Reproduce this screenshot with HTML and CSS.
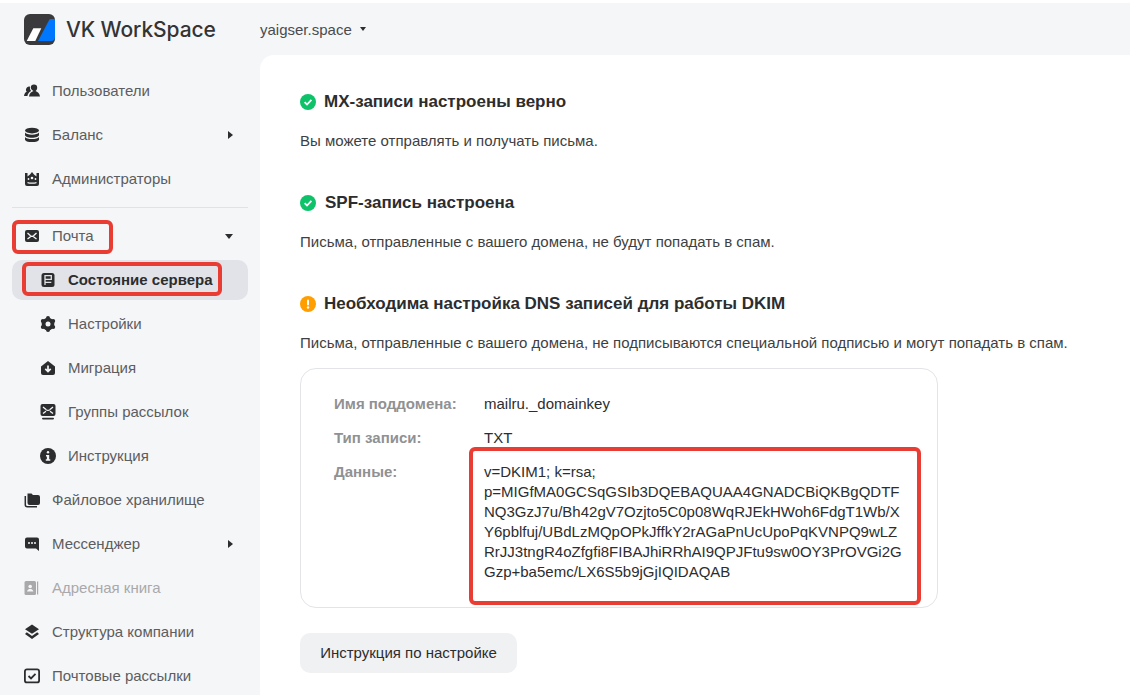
FILE: index.html
```html
<!DOCTYPE html>
<html lang="ru">
<head>
<meta charset="utf-8">
<title>VK WorkSpace</title>
<link rel="stylesheet" href="styles.css">
</head>
<body>
<div class="shell">
  <aside class="sidebar">
    <div class="logo">
      <svg class="logo-mark" viewBox="0 0 31 31"><rect width="31" height="31" rx="6" fill="#3a3a3c"/><path d="M2.700 27L9.300 14.300H17.300L11.300 27Z" fill="#fff"/><path d="M14 27L25.300 5.700Q25.700 5 26.500 5H31V23Q31 27 27 27Z" fill="#07f"/></svg>
      <span class="logo-text">VK WorkSpace</span>
    </div>
    <nav class="menu">
      <a class="item"><svg class="ico" viewBox="0 0 16 16"><path d="M10 1.500a3.200 3.200 0 0 1 3.200 3.200c0 1.400-.8 2.700-1.700 3.400 2 .7 4 2 4.500 5.400H5c.4-3.400 2.500-4.700 4.500-5.400-.9-.7-2.700-2-2.700-3.400A3.200 3.200 0 0 1 10 1.500zM5 3.500c.4 0 .8 0 1 .2-.3 1.800.3 3.300 1.200 4.300C5.300 9 3.800 10.500 3.400 13H0c.3-2.500 1.300-3.600 2.700-4.300C2 8 1.800 7 2.100 6 2.500 4.500 3.700 3.500 5 3.500z" fill="#2c2d2e"/></svg><span>Пользователи</span></a>
      <a class="item"><svg class="ico" viewBox="0 0 16 16"><ellipse cx="8" cy="3.600" rx="7" ry="2.800" fill="#2c2d2e"/><path d="M1 5.600c1 1.500 3.500 2.100 7 2.100s6-.6 7-2.100V8c0 1.500-3 2.700-7 2.700S1 9.500 1 8zM1 10c1 1.500 3.500 2.100 7 2.100s6-.6 7-2.100v2.400c0 1.500-3 2.700-7 2.700s-7-1.200-7-2.700z" fill="#2c2d2e"/></svg><span>Баланс</span><i class="caret-right"></i></a>
      <a class="item"><svg class="ico" viewBox="0 0 16 16"><path d="M1 2h2.500v3.500L6 3.500 8 1l2 2.500 2.500 2V2H15v11a2 2 0 0 1-2 2H3a2 2 0 0 1-2-2z" fill="#2c2d2e"/><circle cx="8" cy="7" r="1.300" fill="#f5f6f8"/><circle cx="4.500" cy="8" r=".9" fill="#f5f6f8"/><circle cx="11.500" cy="8" r=".9" fill="#f5f6f8"/><path d="M3.500 11c2.500.8 6.500.8 9 0v1.300c-2.500.7-6.500.7-9 0z" fill="#f5f6f8"/></svg><span>Администраторы</span></a>
      <hr class="divider">
      <a class="item"><svg class="ico" viewBox="0 0 16 16"><rect x="1" y="2" width="14" height="12" rx="2" fill="#2c2d2e"/><path d="M3.500 5l3 2.800M12.500 5l-3 2.800M3.500 11l3-2.300M12.500 11l-3-2.300M6.500 7.900c1 .7 2 .7 3 0" stroke="#f5f6f8" stroke-width="1.300" fill="none"/></svg><span>Почта</span><i class="caret-down"></i></a>
      <a class="item sub active"><svg class="ico" viewBox="0 0 16 16"><rect x="1.500" y="1" width="13" height="14" rx="2.500" fill="#2c2d2e"/><path d="M5 13V3.700h6.300V7.300H5M5 10.300h6.300" fill="none" stroke="#e2e3e8" stroke-width="1.300"/></svg><span>Состояние сервера</span></a>
      <a class="item sub"><svg class="ico" viewBox="0 0 16 16"><circle cx="8" cy="8" r="6.300" fill="#2c2d2e"/><circle cx="8" cy="2" r="2" fill="#2c2d2e"/><circle cx="8" cy="14" r="2" fill="#2c2d2e"/><circle cx="2.800" cy="5" r="2" fill="#2c2d2e"/><circle cx="13.200" cy="5" r="2" fill="#2c2d2e"/><circle cx="2.800" cy="11" r="2" fill="#2c2d2e"/><circle cx="13.200" cy="11" r="2" fill="#2c2d2e"/><circle cx="8" cy="8" r="2.500" fill="#f5f6f8"/></svg><span>Настройки</span></a>
      <a class="item sub"><svg class="ico" viewBox="0 0 16 16"><path d="M1 6.500L8 1l7 5.500V13a2 2 0 0 1-2 2H3a2 2 0 0 1-2-2z" fill="#2c2d2e"/><path d="M8 5.500v6M5.300 8.800L8 11.500l2.700-2.700" stroke="#f5f6f8" stroke-width="1.700" fill="none"/></svg><span>Миграция</span></a>
      <a class="item sub"><svg class="ico" viewBox="0 0 16 16"><rect x=".5" y="0" width="15" height="12" rx="2" fill="#2c2d2e"/><path d="M3 3l3 2.600M13 3l-3 2.600M3 9.500l3-2.300M13 9.500l-3-2.300M6 5.700c1 .7 3 .7 4 0" stroke="#f5f6f8" stroke-width="1.300" fill="none"/><rect x="2" y="13.700" width="12" height="1.700" rx=".8" fill="#2c2d2e"/></svg><span>Группы рассылок</span></a>
      <a class="item sub"><svg class="ico" viewBox="0 0 16 16"><circle cx="8" cy="8" r="8" fill="#2c2d2e"/><rect x="6.800" y="3" width="2.400" height="2.400" rx="1.200" fill="#f5f6f8"/><path d="M6 7h3.200v4.300H10.300v1.500H5.800v-1.500h1.100V8.500H6z" fill="#f5f6f8"/></svg><span>Инструкция</span></a>
      <a class="item"><svg class="ico" viewBox="0 0 16 16"><path d="M3.500 1.500h4l1.500 1.500h5a2 2 0 0 1 2 2v6a2 2 0 0 1-2 2H5.500a2 2 0 0 1-2-2z" fill="#2c2d2e"/><path d="M1.300 4v8.700a2 2 0 0 0 2 2H13" stroke="#2c2d2e" stroke-width="1.500" fill="none"/></svg><span>Файловое хранилище</span></a>
      <a class="item"><svg class="ico" viewBox="0 0 16 16"><path d="M3 1.500h10a2 2 0 0 1 2 2v11.500l-3-2.500H3a2 2 0 0 1-2-2v-7a2 2 0 0 1 2-2z" fill="#2c2d2e"/><circle cx="5" cy="7" r="1" fill="#f5f6f8"/><circle cx="8" cy="7" r="1" fill="#f5f6f8"/><circle cx="11" cy="7" r="1" fill="#f5f6f8"/></svg><span>Мессенджер</span><i class="caret-right"></i></a>
      <a class="item disabled"><svg class="ico" viewBox="0 0 16 16"><rect x=".5" y="1" width="11.500" height="14" rx="1.500" fill="#a9a9ab"/><rect x="13" y="1.500" width="1.200" height="13" fill="#a9a9ab"/><circle cx="6.200" cy="6.500" r="1.800" fill="#f5f6f8"/><path d="M3 11.500c.5-2 2-2.500 3.200-2.500s2.700.5 3.200 2.500z" fill="#f5f6f8"/></svg><span>Адресная книга</span></a>
      <a class="item"><svg class="ico" viewBox="0 0 16 16"><path d="M8 .5l7 4.700L8 9.800 1 5.200z" fill="#2c2d2e"/><path d="M2.800 8.200L1 9.900l7 5 7-5-1.800-1.700L8 12z" fill="#2c2d2e"/></svg><span>Структура компании</span></a>
      <a class="item"><svg class="ico" viewBox="0 0 16 16"><rect x=".9" y="1.400" width="14.200" height="13" rx="2" fill="none" stroke="#2c2d2e" stroke-width="1.800"/><path d="M4.500 8l2.500 2.400 4.500-4.600" fill="none" stroke="#2c2d2e" stroke-width="1.800"/></svg><span>Почтовые рассылки</span></a>
    </nav>
    <div class="mark mark-mail"></div>
    <div class="mark mark-server"></div>
  </aside>
  <div class="content">
    <header class="topbar"><span class="domain">yaigser.space</span><i class="caret-down small"></i></header>
    <main class="panel">
      <section class="block">
        <h2 class="title"><svg class="status" viewBox="0 0 16 16"><circle cx="8" cy="8" r="8" fill="#0dc268"/><path d="M4.600 8.200l2.400 2.300 4.400-4.600" fill="none" stroke="#fff" stroke-width="1.800"/></svg>MX-записи настроены верно</h2>
        <p class="text">Вы можете отправлять и получать письма.</p>
      </section>
      <section class="block">
        <h2 class="title"><svg class="status" viewBox="0 0 16 16"><circle cx="8" cy="8" r="8" fill="#0dc268"/><path d="M4.600 8.200l2.400 2.300 4.400-4.600" fill="none" stroke="#fff" stroke-width="1.800"/></svg><span class="spf">SPF-запись настроена</span></h2>
        <p class="text">Письма, отправленные с вашего домена, не будут попадать в спам.</p>
      </section>
      <section class="block">
        <h2 class="title"><svg class="status" viewBox="0 0 16 16"><circle cx="8" cy="8" r="8" fill="#ff9e00"/><rect x="7" y="3.500" width="2" height="6" rx="1" fill="#fff"/><circle cx="8" cy="11.500" r="1.200" fill="#fff"/></svg>Необходима настройка DNS записей для работы DKIM</h2>
        <p class="text">Письма, отправленные с вашего домена, не подписываются специальной подписью и могут попадать в спам.</p>
        <div class="card">
          <div class="row"><span class="label">Имя поддомена:</span><span class="value">mailru._domainkey</span></div>
          <div class="row"><span class="label">Тип записи:</span><span class="value">TXT</span></div>
          <div class="row"><span class="label">Данные:</span><span class="value">v=DKIM1; k=rsa;<br>p=MIGfMA0GCSqGSIb3DQEBAQUAA4GNADCBiQKBgQDTF<br>NQ3GzJ7u/Bh42gV7Ozjto5C0p08WqRJEkHWoh6FdgT1Wb/X<br>Y6pblfuj/UBdLzMQpOPkJffkY2rAGaPnUcUpoPqKVNPQ9wLZ<br>RrJJ3tngR4oZfgfi8FIBAJhiRRhAI9QPJFtu9sw0OY3PrOVGi2G<br>Gzp+ba5emc/LX6S5b9jGjIQIDAQAB</span></div>
          <div class="mark mark-data"></div>
        </div>
        <button class="btn">Инструкция по настройке</button>
      </section>
    </main>
  </div>
</div>
</body>
</html>
```
FILE: styles.css
```css
* { box-sizing: border-box; }
html, body { margin: 0; height: 695px; overflow: hidden; background: #fff; }
body { padding-top: 3px; font-family: "Liberation Sans", Arial, sans-serif; color: #2c2d2e; }
.shell { display: flex; height: 692px; background: #f5f6f8; }
.sidebar { position: relative; width: 260px; flex: none; padding: 0 12px; }
.logo { display: flex; align-items: center; gap: 11px; height: 52px; padding-left: 12px; }
.logo-mark { width: 31px; height: 31px; flex: none; }
.logo-text { font-family: Inter, sans-serif; font-weight: 500; font-size: 21px; letter-spacing: -0.1px; color: #333436; }
.menu { display: flex; flex-direction: column; padding-top: 14px; }
.item { display: flex; align-items: center; height: 44px; padding: 0 12px; gap: 12px; font-size: 15px; color: #5c5d60; border-radius: 10px; flex: none; }
.item.sub { padding-left: 28px; }
.item.active { height: 40px; margin: 2px 0; color: #2c2d2e; font-weight: 700; background: #e2e3e8; }
.item.disabled { color: #a9a9ab; }
.item span { flex: 1; padding-bottom: 2px; }
.ico { width: 16px; height: 16px; flex: none; overflow: visible; }
.caret-right { width: 0; height: 0; border-left: 5px solid #2c2d2e; border-top: 4px solid transparent; border-bottom: 4px solid transparent; margin-right: 3px; }
.caret-down { width: 0; height: 0; border-top: 5px solid #2c2d2e; border-left: 4px solid transparent; border-right: 4px solid transparent; margin-right: 3px; }
.caret-down.small { border-top-width: 4px; border-left-width: 3.5px; border-right-width: 3.5px; margin: 0 0 0 8px; }
.divider { border: 0; border-top: 1px solid #e1e2e6; margin: 6px 0 6px; flex: none; }
.mark { position: absolute; border: 4px solid #e93c33; border-radius: 6px; pointer-events: none; }
.mark-mail { left: 12px; top: 217px; width: 101px; height: 34px; }
.mark-server { left: 22px; top: 259px; width: 200px; height: 34px; }
.content { flex: 1; display: flex; flex-direction: column; min-width: 0; }
.topbar { height: 52px; display: flex; align-items: center; flex: none; }
.domain { font-size: 15px; color: #4a4b4e; }
.panel { flex: 1; background: #fff; border-top-left-radius: 14px; padding: 37px 40px 0; }
.block { margin-bottom: 42px; }
.title { display: flex; align-items: center; gap: 8px; margin: 0; font-size: 17px; line-height: 20px; font-weight: 700; color: #2c2d2e; }
.status { width: 16px; height: 16px; flex: none; }
.spf { margin-left: 1px; }
.text { margin: 19px 0 0; font-size: 15px; line-height: 20px; color: #3e3f42; }
.card { position: relative; width: 638px; height: 240px; margin-top: 15px; padding: 25px 33px; border: 1px solid #e3e4e8; border-radius: 16px; }
.row { display: flex; font-size: 15px; line-height: 20px; margin-bottom: 14px; }
.label { width: 150px; flex: none; font-weight: 700; color: #909193; }
.value { color: #2c2d2e; }
.mark-data { left: 168px; top: 78px; width: 452px; height: 158px; }
.btn { display: block; width: 217px; height: 40px; margin-top: 25px; padding: 0; border: 0; border-radius: 10px; background: #f0f1f3; font: 15px/20px "Liberation Sans", Arial, sans-serif; color: #2c2d2e; }
```
